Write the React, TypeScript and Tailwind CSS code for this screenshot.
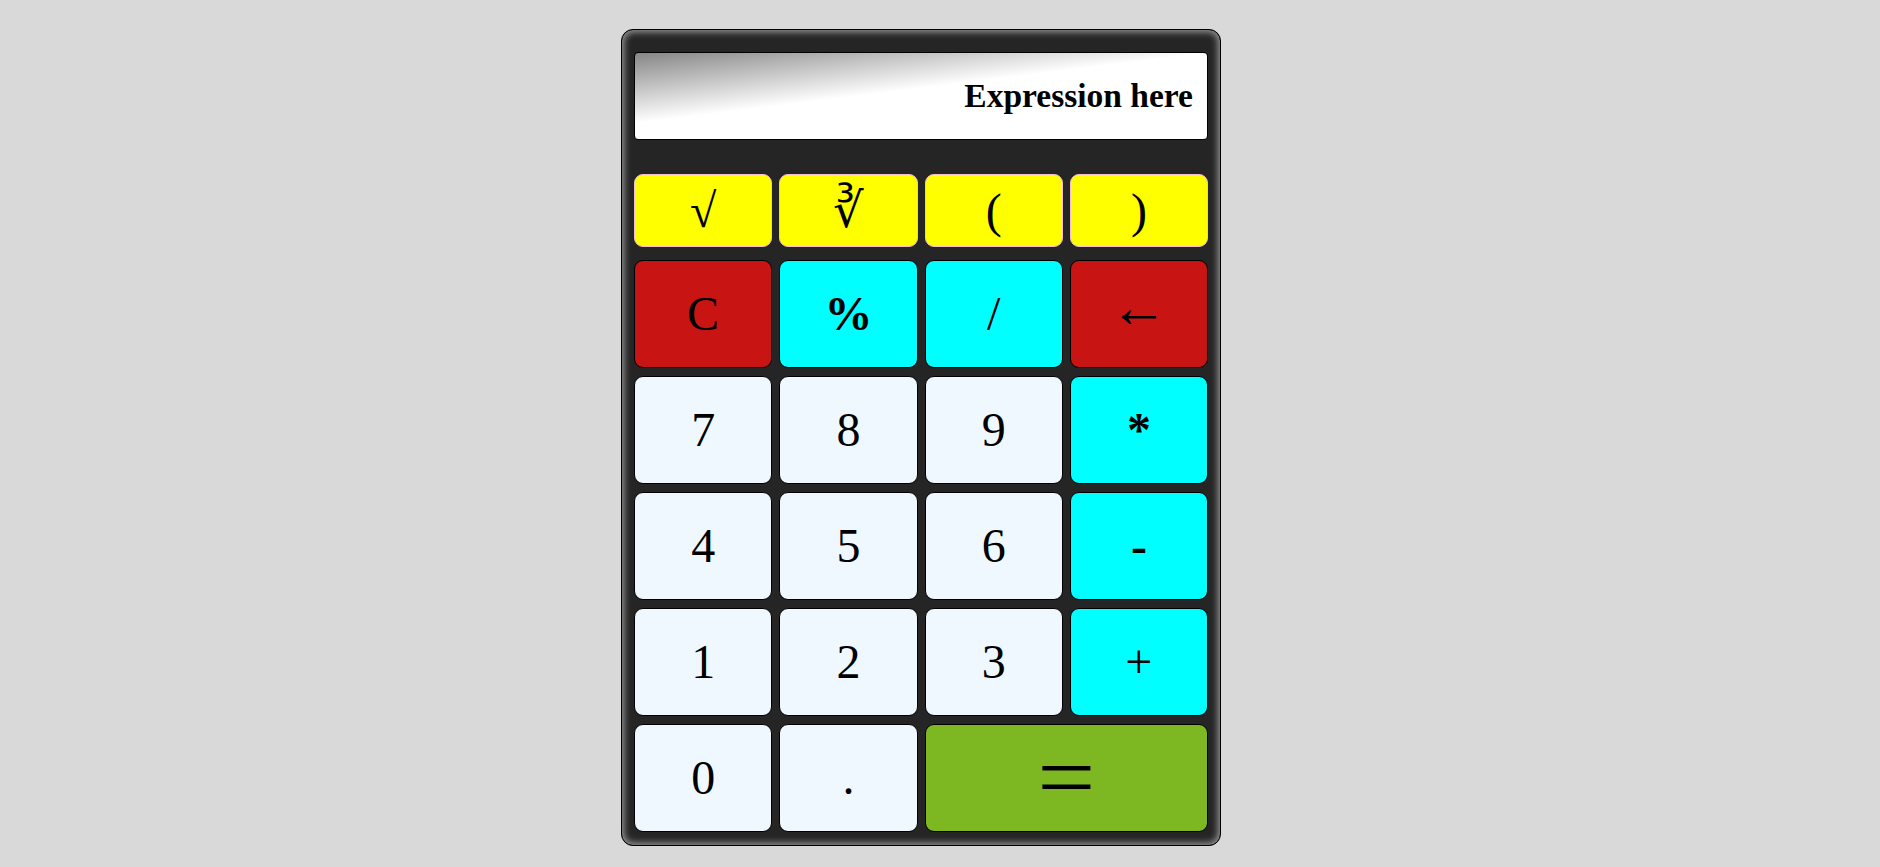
import React from 'react';

type Key = {
  label: string;
  tone: 'fn' | 'clear' | 'op' | 'num' | 'eq';
  bold?: boolean;
  wide?: boolean;
  size?: string;
};

const fnKeys = ['√', '∛', '(', ')'];

const keys: Key[] = [
  { label: 'C', tone: 'clear' },
  { label: '%', tone: 'op', bold: true },
  { label: '/', tone: 'op' },
  { label: '←', tone: 'clear', size: 'text-[58px] -translate-y-[6px]' },
  { label: '7', tone: 'num' },
  { label: '8', tone: 'num' },
  { label: '9', tone: 'num' },
  { label: '*', tone: 'op', bold: true },
  { label: '4', tone: 'num' },
  { label: '5', tone: 'num' },
  { label: '6', tone: 'num' },
  { label: '-', tone: 'op', bold: true },
  { label: '1', tone: 'num' },
  { label: '2', tone: 'num' },
  { label: '3', tone: 'num' },
  { label: '+', tone: 'op' },
  { label: '0', tone: 'num' },
  { label: '.', tone: 'num' },
  { label: '=', tone: 'eq', wide: true },
];

const toneClass: Record<Key['tone'], string> = {
  fn: 'bg-[#ffff00] border-[#f5bfcb]',
  clear: 'bg-[#c91414] border-black',
  op: 'bg-[#00ffff] border-black',
  num: 'bg-[#f0f8ff] border-black',
  eq: 'bg-[#7db823] border-black',
};

function CalcKey({ k }: { k: Key }) {
  return (
    <button
      className={`flex items-center justify-center rounded-[9px] border text-black ${toneClass[k.tone]} ${
        k.wide ? 'col-span-2' : ''
      } ${k.bold ? 'font-bold' : 'font-normal'}`}
    >
      {k.tone === 'eq' ? (
        <span className="inline-block scale-x-[1.2] scale-y-[1.05] text-[86px] leading-none">=</span>
      ) : (
        <span className={`inline-block ${k.size ?? 'text-[48px]'} leading-none`}>{k.label}</span>
      )}
    </button>
  );
}

export default function App() {
  return (
    <div className="min-h-screen bg-[#d9d9d9] pt-[29px] font-['Liberation_Serif','DejaVu_Sans',serif]">
      <div className="ml-[621px] w-[600px] rounded-[12px] border border-black bg-[#252525] px-[12px] pt-[22px] pb-[13px] shadow-[inset_0_0_7px_2px_#9a9a9a]">
        <div className="flex h-[88px] items-center justify-end rounded-[4px] border border-black bg-[linear-gradient(173deg,#868686_0%,#ffffff_45%)] pr-[14px]">
          <span className="text-[33.5px] font-bold text-black">Expression here</span>
        </div>

        <div className="mt-[34px] grid h-[73px] grid-cols-4 gap-x-[7px]">
          {fnKeys.map((f) => (
            <button
              key={f}
              className="flex items-center justify-center rounded-[9px] border border-[#f5bfcb] bg-[#ffff00] text-black"
            >
              <span className="text-[48px] leading-none">{f}</span>
            </button>
          ))}
        </div>

        <div className="mt-[13px] grid grid-cols-4 auto-rows-[108px] gap-x-[7px] gap-y-[8px]">
          {keys.map((k) => (
            <CalcKey key={k.label} k={k} />
          ))}
        </div>
      </div>
    </div>
  );
}
